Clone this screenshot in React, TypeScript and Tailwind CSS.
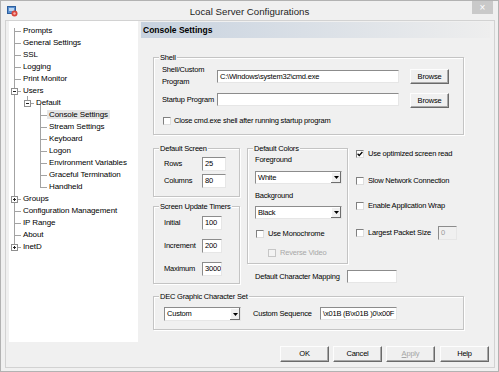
import type { ReactNode } from "react";
import clsx from "clsx";

type TreeNode = { label: string; level: 0 | 1 | 2; toggle?: "-" | "+"; selected?: boolean };

const tree: TreeNode[] = [
  { label: "Prompts", level: 0 },
  { label: "General Settings", level: 0 },
  { label: "SSL", level: 0 },
  { label: "Logging", level: 0 },
  { label: "Print Monitor", level: 0 },
  { label: "Users", level: 0, toggle: "-" },
  { label: "Default", level: 1, toggle: "-" },
  { label: "Console Settings", level: 2, selected: true },
  { label: "Stream Settings", level: 2 },
  { label: "Keyboard", level: 2 },
  { label: "Logon", level: 2 },
  { label: "Environment Variables", level: 2 },
  { label: "Graceful Termination", level: 2 },
  { label: "Handheld", level: 2 },
  { label: "Groups", level: 0, toggle: "+" },
  { label: "Configuration Management", level: 0 },
  { label: "IP Range", level: 0 },
  { label: "About", level: 0 },
  { label: "InetD", level: 0, toggle: "+" },
];

const indent = ["pl-[14px]", "pl-[27px]", "pl-[40px]"];
const lineX = [5, 18, 31];

function TreeLines() {
  const cy = (i: number) => 10 + 12 * i + 0.5;
  return (
    <svg className="pointer-events-none absolute inset-0" width={129} height={321} shapeRendering="crispEdges">
      <g stroke="#a3a3a3" strokeWidth={1}>
        <line x1={5.5} y1={7} x2={5.5} y2={cy(18)} />
        <line x1={18.5} y1={cy(5) + 4} x2={18.5} y2={cy(6)} />
        <line x1={31.5} y1={cy(6)} x2={31.5} y2={cy(13)} />
        {tree.map((n, i) => (
          <line key={i} x1={lineX[n.level] + 0.5} y1={cy(i)} x2={lineX[n.level] + 7} y2={cy(i)} />
        ))}
      </g>
      {tree.map((n, i) =>
        n.toggle ? (
          <g key={i} stroke="#8e8e8e" strokeWidth={1}>
            <rect x={lineX[n.level] - 2.5} y={cy(i) - 3} width={6} height={6} fill="#fff" />
            <line x1={lineX[n.level] - 1} y1={cy(i)} x2={lineX[n.level] + 2} y2={cy(i)} stroke="#222" />
            {n.toggle === "+" ? (
              <line x1={lineX[n.level] + 0.5} y1={cy(i) - 1.5} x2={lineX[n.level] + 0.5} y2={cy(i) + 1.5} stroke="#222" />
            ) : null}
          </g>
        ) : null
      )}
    </svg>
  );
}

function Group(props: { title: string; className?: string; children?: ReactNode }) {
  return (
    <div className={clsx("relative border border-[#c4c4c4] shadow-[inset_1px_1px_0_#ffffff,1px_1px_0_#ffffff]", props.className)}>
      <span className="absolute -top-[5px] left-[5px] bg-[#f0f0f0] px-[1px] leading-[9px]">{props.title}</span>
      {props.children}
    </div>
  );
}

function Field(props: { value?: string; className?: string; disabled?: boolean }) {
  return (
    <div
      className={clsx(
        "flex shrink-0 items-center overflow-hidden whitespace-nowrap border border-t-[#8c8c8c] border-l-[#8c8c8c] border-r-[#e6e6e6] border-b-[#e6e6e6] pl-[2px] leading-none",
        props.disabled ? "bg-[#f0f0f0] text-[#9a9a9a]" : "bg-white",
        props.className
      )}
    >
      {props.value}
    </div>
  );
}

function Select(props: { value: string; className?: string }) {
  return (
    <div
      className={clsx(
        "flex shrink-0 items-stretch border border-t-[#8c8c8c] border-l-[#8c8c8c] border-r-[#e6e6e6] border-b-[#e6e6e6] bg-white leading-none",
        props.className
      )}
    >
      <span className="flex flex-1 items-center pl-[2px]">{props.value}</span>
      <span className="flex w-[10px] items-center justify-center bg-[#f0f0f0] shadow-[inset_-1px_-1px_0_#6e6e6e,inset_1px_1px_0_#ffffff]">
        <svg width="5" height="3" viewBox="0 0 5 3">
          <path d="M0 0 H5 L2.5 3 Z" fill="#000" />
        </svg>
      </span>
    </div>
  );
}

function Btn(props: { children: ReactNode; className?: string; disabled?: boolean }) {
  return (
    <div
      className={clsx(
        "flex shrink-0 items-center justify-center border border-t-[#fdfdfd] border-l-[#fdfdfd] border-r-[#6a6a6a] border-b-[#6a6a6a] bg-[#f0f0f0] shadow-[inset_-1px_-1px_0_#a8a8a8]",
        props.disabled ? "text-[#a6a6a6]" : "text-black",
        props.className
      )}
    >
      {props.children}
    </div>
  );
}

function Check(props: { checked?: boolean; disabled?: boolean; className?: string }) {
  return (
    <span
      className={clsx(
        "flex h-[8px] w-[8px] shrink-0 items-center justify-center border",
        props.disabled
          ? "border-[#c6c6c6] bg-[#f3f3f3]"
          : "border-t-[#808080] border-l-[#808080] border-r-[#dedede] border-b-[#dedede] bg-white",
        props.className
      )}
    >
      {props.checked ? (
        <svg width="6" height="6" viewBox="0 0 6 6">
          <path d="M0.6 2.8 L2.2 4.5 L5.4 1" stroke="#000" strokeWidth="1.3" fill="none" />
        </svg>
      ) : null}
    </span>
  );
}

function LabeledField(props: { label: string; value: string; labelW: string; fieldW: string; className?: string }) {
  return (
    <div className={clsx("flex h-[14px] items-center", props.className)}>
      <span className={props.labelW}>{props.label}</span>
      <Field className={clsx("h-[14px]", props.fieldW)} value={props.value} />
    </div>
  );
}

export default function App() {
  return (
    <div className="flex h-[372px] w-[499px] flex-col overflow-hidden border border-[#b2b2b2] bg-[#f0f0f0] font-['Liberation_Sans',Arial,sans-serif] text-black">
      <div className="flex h-[19px] items-start">
        <div className="flex w-[40px] items-center pl-[6px] pt-[5px]">
          <svg width="11" height="11" viewBox="0 0 11 11">
            <rect x="0.5" y="0.5" width="8" height="7" fill="#5a8fd0" stroke="#2c5f9e" />
            <rect x="2" y="2" width="5" height="3" fill="#bcd6f0" />
            <circle cx="7.5" cy="7.5" r="3" fill="#d9443a" />
            <circle cx="7.5" cy="7.5" r="1.2" fill="#f4b2ad" />
          </svg>
        </div>
        <div className="flex-1 pt-[4px] text-center text-[9.7px] leading-[14px] text-[#1e1e1e]">Local Server Configurations</div>
        <div className="flex w-[40px] justify-end pr-[5px]">
          <div className="flex h-[13px] w-[21px] items-center justify-center bg-[#c9c9c9] text-[10px] leading-none text-white">×</div>
        </div>
      </div>

      <div className="mb-[3px] ml-[4px] mr-[3px] flex flex-1 border border-[#d2d2d2]">
        <div className="relative ml-[3px] h-[321px] w-[129px] shrink-0 bg-white text-[8px] tracking-[-0.1px]">
          <TreeLines />
          <div className="relative flex flex-col pt-[4px]">
            {tree.map((n) => (
              <div key={n.label} className={clsx("h-[12px] whitespace-nowrap leading-[12px]", indent[n.level])}>
                <span className={clsx(n.selected && "-ml-[2px] bg-[#e6e6e6] px-[2px]")}>{n.label}</span>
              </div>
            ))}
          </div>
        </div>

        <div className="ml-[3px] flex flex-1 flex-col">
          <div className="mt-[1px] flex h-[16px] w-[349px] items-center bg-linear-to-r from-[#c7d2df] to-[#eeeeee] pl-[2px] text-[8.5px] font-bold">
            Console Settings
          </div>

          <div className="pl-[12px] text-[7.5px] tracking-[-0.2px]">
            <Group title="Shell" className="mt-[19px] h-[78px] w-[311px] pl-[8px] pt-[11px]">
              <div className="flex h-[15px] items-start">
                <div className="-mt-[5px] w-[55px] leading-[12px]">
                  Shell/Custom
                  <br />
                  Program
                </div>
                <Field className="mt-[1px] h-[13px] w-[182px]" value={"C:\\Windows\\system32\\cmd.exe"} />
                <Btn className="ml-[11px] h-[15px] w-[39px]">Browse</Btn>
              </div>
              <div className="mt-[9px] flex h-[15px] items-start">
                <div className="w-[55px] leading-[13px]">Startup Program</div>
                <Field className="h-[13px] w-[182px]" value="" />
                <Btn className="ml-[11px] h-[15px] w-[39px]">Browse</Btn>
              </div>
              <div className="mt-[9px] flex h-[8px] items-center">
                <Check className="ml-[1px]" />
                <span className="ml-[3px]">Close cmd.exe shell after running startup program</span>
              </div>
            </Group>

            <div className="mt-[13px] flex items-start">
              <div className="flex w-[87px] shrink-0 flex-col">
                <Group title="Default Screen" className="h-[49px] pl-[10px] pt-[8px]">
                  <LabeledField label="Rows" value="25" labelW="w-[38px]" fieldW="w-[24px]" />
                  <LabeledField label="Columns" value="80" labelW="w-[38px]" fieldW="w-[24px]" className="mt-[3px]" />
                </Group>
                <Group title="Screen Update Timers" className="mt-[9px] h-[78px] pl-[10px] pt-[9px]">
                  <LabeledField label="Initial" value="100" labelW="w-[38px]" fieldW="w-[20px]" />
                  <LabeledField label="Increment" value="200" labelW="w-[38px]" fieldW="w-[20px]" className="mt-[9px]" />
                  <LabeledField label="Maximum" value="3000" labelW="w-[38px]" fieldW="w-[20px]" className="mt-[9px]" />
                </Group>
              </div>

              <div className="ml-[7px] flex flex-col">
                <div className="flex items-start">
                  <Group title="Default Colors" className="h-[116px] w-[101px] shrink-0 pl-[7px] pt-[6px]">
                    <div className="leading-[10px]">Foreground</div>
                    <Select className="mt-[6px] h-[13px] w-[87px]" value="White" />
                    <div className="mt-[7px] leading-[10px]">Background</div>
                    <Select className="mt-[5px] h-[13px] w-[87px]" value="Black" />
                    <div className="mt-[11px] flex h-[8px] items-center">
                      <Check className="ml-[1px]" />
                      <span className="ml-[4px]">Use Monochrome</span>
                    </div>
                    <div className="mt-[11px] flex h-[8px] items-center text-[#a8a8a8]">
                      <Check className="ml-[13px]" disabled />
                      <span className="ml-[4px]">Reverse Video</span>
                    </div>
                  </Group>

                  <div className="ml-[8px] flex flex-col">
                    <div className="flex h-[12px] items-center">
                      <Check checked />
                      <span className="ml-[4px]">Use optimized screen read</span>
                    </div>
                    <div className="mt-[15px] flex h-[12px] items-center">
                      <Check />
                      <span className="ml-[4px]">Slow Network Connection</span>
                    </div>
                    <div className="mt-[13px] flex h-[12px] items-center">
                      <Check />
                      <span className="ml-[4px]">Enable Application Wrap</span>
                    </div>
                    <div className="mt-[14px] flex h-[14px] items-center">
                      <Check />
                      <span className="ml-[4px] w-[70px]">Largest Packet Size</span>
                      <Field className="h-[14px] w-[19px]" value="0" disabled />
                    </div>
                  </div>
                </div>

                <div className="mt-[6px] flex h-[13px] items-center pl-[8px]">
                  <span className="w-[92px]">Default Character Mapping</span>
                  <Field className="h-[13px] w-[50px]" value="" />
                </div>
              </div>
            </div>

            <Group title="DEC Graphic Character Set" className="mt-[12px] flex h-[34px] w-[311px] items-start pl-[10px] pt-[10px]">
              <Select className="h-[14px] w-[77px]" value="Custom" />
              <span className="ml-[12px] w-[67px] leading-[14px]">Custom Sequence</span>
              <Field className="h-[13px] w-[77px]" value={"\\x01B (B\\x01B )0\\x00F"} />
            </Group>

            <div className="ml-[127px] mt-[16px] flex gap-[4px]">
              <Btn className="h-[16px] w-[49px]">OK</Btn>
              <Btn className="h-[16px] w-[49px]">Cancel</Btn>
              <Btn className="h-[16px] w-[49px]" disabled>
                <span className="underline">A</span>pply
              </Btn>
              <Btn className="ml-[1px] h-[16px] w-[49px]">Help</Btn>
            </div>
          </div>
        </div>
      </div>
    </div>
  );
}
